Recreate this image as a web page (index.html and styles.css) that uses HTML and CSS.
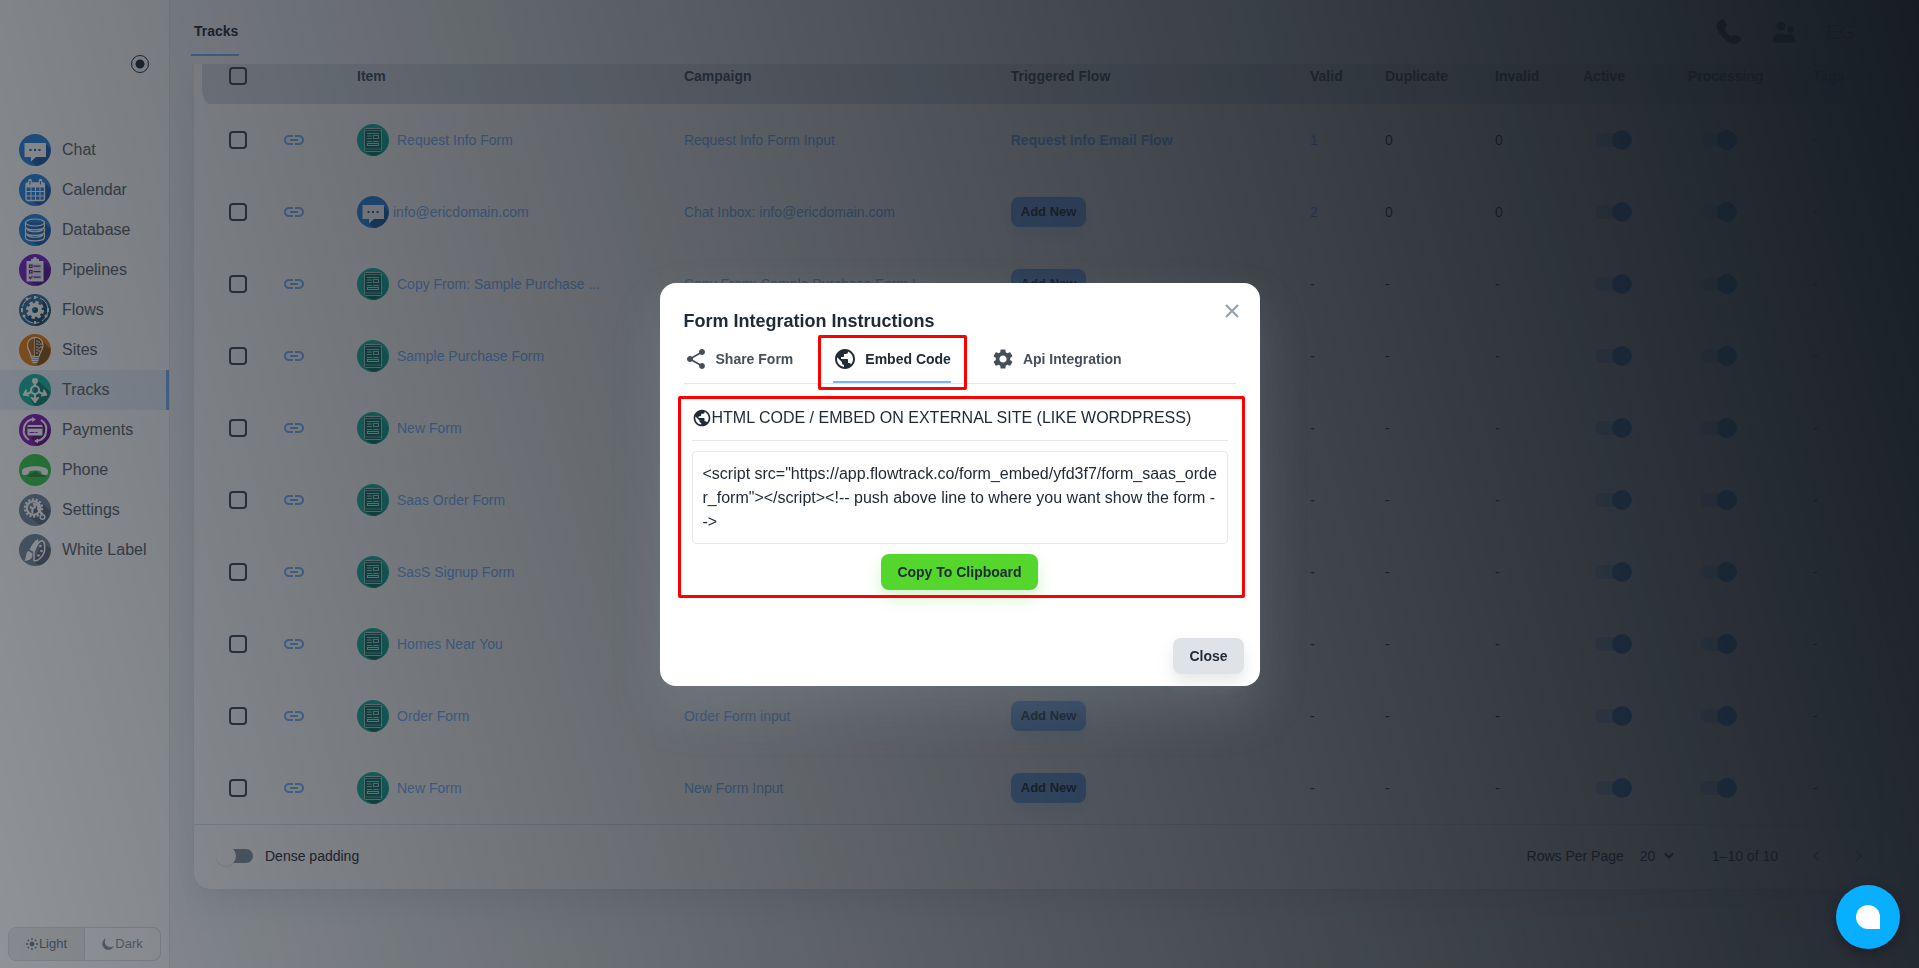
FILE: index.html
```html
<!DOCTYPE html>
<html lang="en">
<head>
<meta charset="utf-8">
<title>Tracks</title>
<link rel="stylesheet" href="styles.css">
</head>
<body>
<svg class="sprite" aria-hidden="true">
  <symbol id="chat" viewBox="0 0 32 32"><circle cx="16" cy="16" r="16" fill="#2583e0"/><path d="M26 9.500l5.400 5.500A16 16 0 0 1 17 32l-5-5z" fill="#1a5ba6"/><path d="M5.500 9h21.500v14H17l-5 4.500V23H5.500z" fill="#fff"/><path d="M10.500 15h2v2h-2zm4.500 0h2v2h-2zm4.500 0h2v2h-2z" fill="#1a5ba6"/></symbol>
  <symbol id="calendar" viewBox="0 0 32 32"><circle cx="16" cy="16" r="16" fill="#2583e0"/><path d="M26 9l5.500 6A16 16 0 0 1 20 31.500L12 26z" fill="#1a5ba6"/><rect x="7" y="9" width="18.500" height="17.500" rx="2" fill="#2583e0" stroke="#fff" stroke-width="1.300"/><path d="M7 9h18.500v4.500H7z" fill="#fff"/><path d="M11 6.500v4m10.500-4v4" stroke="#fff" stroke-width="3.500" stroke-linecap="round"/><path d="M11 7v3.500m10.500-3.500v3.500" stroke="#2583e0" stroke-width="1.200"/><path d="M7 17.500h18M7 22h18M12 13v13m4.500-13v13M21 13v13" stroke="#fff"/></symbol>
  <symbol id="database" viewBox="0 0 32 32"><circle cx="16" cy="16" r="16" fill="#2583e0"/><path d="M25 8l6.500 7A16 16 0 0 1 20 31.500l-8-5z" fill="#1a5ba6"/><path d="M7 8.500v15c0 4.500 18 4.500 18 0v-15z" fill="#2168b8"/><g fill="none" stroke="#fff" stroke-width="1.200"><ellipse cx="16" cy="8.500" rx="9.500" ry="3.500"/><path d="M6.500 8.500v4c0 4.500 19 4.500 19 0v-4M6.500 14v4c0 4.500 19 4.500 19 0v-4M6.500 19.500v4c0 4.500 19 4.500 19 0v-4M8 15.500c3 3 13 3 16 0M8 21c3 3 13 3 16 0"/></g></symbol>
  <symbol id="pipelines" viewBox="0 0 32 32"><circle cx="16" cy="16" r="16" fill="#7721c6"/><path d="M24.500 8l7 6A16 16 0 0 1 19 31.500L9 27z" fill="#511b91"/><path d="M7.500 7h17v20.500h-17z" fill="#fff"/><path d="M9.500 9.500h13v16h-13z" fill="#e8e0f1"/><path d="M12 5h2a2 2 0 0 1 4 0h2v4h-8z" fill="#fff"/><path d="M10.500 11h2.500v2.500h-2.500zm0 5.500h2.500v2.500h-2.500zM14.500 12.200h7m-7 5.500h7m-7 5.500h7M10 23l1.500 1.500 2-2.500" stroke="#612199" fill="none" stroke-width="1.200"/></symbol>
  <symbol id="flows" viewBox="0 0 32 32"><circle cx="16" cy="16" r="16" fill="#2d7199"/><path d="M25 7l6.500 8A16 16 0 0 1 17 32L8 24z" fill="#204d6b"/><circle cx="16" cy="16" r="13" fill="none" stroke="#fff" stroke-width="1" stroke-dasharray="13 3 4 2"/><path d="M16 2v3m0 22v3M3 14v4m26-4v4" stroke="#fff" stroke-width="2"/><circle cx="8" cy="5" r="1.500" fill="#fff"/><circle cx="27" cy="22" r="1.500" fill="#fff"/><circle cx="5" cy="22" r="1.500" fill="#fff"/><circle cx="16" cy="16" r="7.500" fill="none" stroke="#fff" stroke-width="3" stroke-dasharray="3.400 2.490"/><circle cx="16" cy="16" r="5" fill="none" stroke="#fff" stroke-width="4"/></symbol>
  <symbol id="sites" viewBox="0 0 32 32"><circle cx="16" cy="16" r="16" fill="#e98110"/><path d="M22 6l9.500 9A16 16 0 0 1 19 31.500L13 27z" fill="#8f540f"/><path d="M16 3.500v19h-4c0-4-3.500-6-3.500-11A7.500 7.500 0 0 1 16 3.500z" fill="#bd6b10" stroke="#fff" stroke-width="1.300"/><path d="M16 3.500a7.500 7.500 0 0 1 8 8c0 4-3.500 7-4 11h-4" fill="#7a4a12" stroke="#fff" stroke-width="1.200"/><path d="M18 6v14m2-13v4m0 2v5m2-9v5" stroke="#fff" stroke-width="1.100" stroke-dasharray="2 1"/><path d="M12 24.500h8m-7.500 2h7m-6 2h5" stroke="#fff" stroke-width="1.400"/></symbol>
  <symbol id="tracks" viewBox="0 0 32 32"><circle cx="16" cy="16" r="16" fill="#1bb5a0"/><path d="M17 5l14.500 13A16 16 0 0 1 16 32l-4-5 3-8z" fill="#17816f"/><circle cx="16" cy="16" r="4" fill="none" stroke="#fff" stroke-width="2"/><path d="M16 6v6m-4 6l-4 2m12-2l4 2m-8 0v5" stroke="#fff" stroke-width="2.200"/><circle cx="16" cy="7" r="3" fill="#fff"/><path d="M12 23.500c3 1 5 1 8 0l-4 5.500zM7 15.500c0 3 1.500 5 3 6.500l-6-1zM25 15.500c0 3-1.500 5-3 6.500l6-1z" fill="#fff" stroke="#fff"/></symbol>
  <symbol id="payments" viewBox="0 0 32 32"><circle cx="16" cy="16" r="16" fill="#861bb5"/><path d="M24 10l7.500 6A16 16 0 0 1 18 32l-6-8z" fill="#5d137f"/><path d="M14 5a11.500 11.500 0 0 0-4 21M18 27a11.500 11.500 0 0 0 4-21M5 17a11 11 0 0 1 5-10.500M27 15a11 11 0 0 1-5 11" fill="none" stroke="#fff" stroke-width="2"/><path d="M13 3l4 2.500-4 2.500zM19 24.500l-4 2.500 4 2.500z" fill="#fff"/><rect x="8.500" y="11" width="15" height="10.500" rx="1" fill="#fff"/><path d="M8.500 13.800h15" stroke="#5d137f" stroke-width="1.600"/><path d="M10.500 18.500h5m1 0h2" stroke="#861bb5"/></symbol>
  <symbol id="phone" viewBox="0 0 32 32"><circle cx="16" cy="16" r="16" fill="#36c94c"/><path d="M29 18l-7 3-5-4-6 3-4 2 5 1h14z" fill="#278f38"/><path d="M3 17c0-6 26-6.500 26 0 0 3-.5 4-2 4-3 0-5-.5-5-3.500-4-1.500-8-1.500-12 0 0 3-2 3.500-5 3.500-1.500 0-2-1-2-4z" fill="#fff"/></symbol>
  <symbol id="settings" viewBox="0 0 32 32"><circle cx="16" cy="16" r="16" fill="#76879a"/><path d="M22 8l9.500 9A16 16 0 0 1 21 31l-12-9z" fill="#596878"/><circle cx="14.500" cy="14" r="8.500" fill="none" stroke="#fff" stroke-width="2.400" stroke-dasharray="2.200 1.614"/><circle cx="14.500" cy="14" r="6.700" fill="none" stroke="#fff" stroke-width="2"/><path d="M11 12.500l2.500 2.500 2.500-2-1-3c3-.5 5 2 4 5l5 6M14 16c-1 1-1 2 0 3" fill="none" stroke="#fff" stroke-width="2"/><circle cx="23.500" cy="23" r="2.300" fill="#596878" stroke="#fff" stroke-width="1.500"/></symbol>
  <symbol id="label" viewBox="0 0 32 32"><circle cx="16" cy="16" r="16" fill="#76879a"/><path d="M23 8l8.500 7A16 16 0 0 1 20 31.500l-5-4z" fill="#596878"/><path d="M15 19c1-6 5-12 8-12.500 3 1 3 5 2.500 11C24 22 19 28 15 26.500z" fill="none" stroke="#fff" stroke-width="1.500"/><circle cx="21.500" cy="12" r="1.300" fill="#fff"/><circle cx="22.500" cy="17" r="1.300" fill="#fff"/><circle cx="19.500" cy="21.500" r="1.300" fill="#fff"/><path d="M19 5c1.500 5-2.500 10-4.500 13L10.500 15.500C13 11 15 7 19 5zM9.500 17l4 2.500c0 5-2.500 7-8 7.500C7.500 24 6.500 18 9.500 17z" fill="#fff"/></symbol>
  <symbol id="form" viewBox="0 0 32 32"><circle cx="16" cy="16" r="16" fill="#13b4a0"/><path d="M24 5l7.500 10A16 16 0 0 1 17 32l-9-4z" fill="#0fa291"/><path d="M8 27.500h17l-6 4-4 .3z" fill="#0b6f66"/><rect x="7.500" y="4.500" width="17" height="23" rx="1" fill="#0c6f64" stroke="#a9d3cf"/><path d="M7.500 25h17M8 6.500h16" stroke="#8fc3be" stroke-width=".8"/><path d="M10 9.500h12M10 12h5m-5 2.500h5m-5 3h5M16 17.500h6" stroke="#a9d3cf"/><rect x="16.500" y="11.500" width="5" height="3" fill="none" stroke="#a9d3cf"/><rect x="10.500" y="19.500" width="11" height="2" fill="none" stroke="#c4e2df"/></symbol>
  <symbol id="link" viewBox="0 0 24 24"><path fill="currentColor" d="M3.900 12c0-1.710 1.390-3.100 3.100-3.100h4V7H7c-2.760 0-5 2.240-5 5s2.240 5 5 5h4v-1.900H7c-1.710 0-3.100-1.390-3.100-3.100zM8 13h8v-2H8v2zm9-6h-4v1.900h4c1.710 0 3.100 1.390 3.100 3.100s-1.390 3.100-3.100 3.100h-4V17h4c2.760 0 5-2.240 5-5s-2.240-5-5-5z"/></symbol>
  <symbol id="globe" viewBox="0 0 24 24"><path fill="currentColor" d="M12 2C6.480 2 2 6.480 2 12s4.480 10 10 10 10-4.480 10-10S17.520 2 12 2zm-1 17.930c-3.950-.49-7-3.850-7-7.930 0-.62.080-1.210.21-1.790L9 15v1c0 1.100.9 2 2 2v1.930zm6.900-2.540c-.26-.81-1-1.390-1.900-1.390h-1v-3c0-.55-.45-1-1-1H8v-2h2c.55 0 1-.45 1-1V7h2c1.100 0 2-.9 2-2v-.41c2.930 1.190 5 4.060 5 7.410 0 2.080-.8 3.970-2.100 5.390z"/></symbol>
</svg>

<div class="app">
  <aside class="sidebar">
    <div class="pin"><input type="radio" checked aria-label="Pin menu"></div>
    <nav class="menu">
      <a href="#"><svg><use href="#chat"/></svg>Chat</a>
      <a href="#"><svg><use href="#calendar"/></svg>Calendar</a>
      <a href="#"><svg><use href="#database"/></svg>Database</a>
      <a href="#"><svg><use href="#pipelines"/></svg>Pipelines</a>
      <a href="#"><svg><use href="#flows"/></svg>Flows</a>
      <a href="#"><svg><use href="#sites"/></svg>Sites</a>
      <a href="#" class="current"><svg><use href="#tracks"/></svg>Tracks</a>
      <a href="#"><svg><use href="#payments"/></svg>Payments</a>
      <a href="#"><svg><use href="#phone"/></svg>Phone</a>
      <a href="#"><svg><use href="#settings"/></svg>Settings</a>
      <a href="#"><svg><use href="#label"/></svg>White Label</a>
    </nav>
    <div class="theme">
      <button class="on"><svg viewBox="0 0 12 12"><circle cx="6" cy="6" r="2.300" fill="currentColor"/><path d="M6 0v2m0 8v2M0 6h2m8 0h2M1.800 1.800l1.300 1.300m5.800 5.800l1.300 1.300m0-8.400L8.900 3.100M3.100 8.900l-1.300 1.300" stroke="currentColor" stroke-width="1.300"/></svg>Light</button>
      <button><svg viewBox="0 0 12 12"><path d="M4 .3a6 6 0 1 0 8 7.500A5.500 5.500 0 0 1 4 .3z" fill="currentColor"/></svg>Dark</button>
    </div>
  </aside>

  <main class="main">
    <header class="topbar">
      <a href="#" class="page-tab">Tracks</a>
      <div class="tools">
        <svg class="tool-phone" viewBox="0 0 24 24"><path d="M4.200 1.200C5.500 0 7 .3 7.800 1.700l1.700 3c.7 1.300.4 2.500-.6 3.400l-1 .9c.8 2.600 3.600 5.700 6.600 7.200l1.100-1c1-.9 2.200-1 3.400-.3l3 1.900c1.400.9 1.600 2.400.5 3.600-2 2.600-5.300 4-8.500 2.300C7.500 19.500 3 14 .8 8.500-.2 5.500 1.600 3 4.200 1.200z" fill="currentColor"/></svg>
        <svg class="tool-people" viewBox="0 0 24 22"><circle cx="9" cy="5" r="4.700" fill="currentColor"/><circle cx="18.500" cy="8.500" r="3.200" fill="currentColor"/><path d="M.5 21.500c0-12 17-12 17 0zM14 14.500c4-3 9.500-.5 9.500 7H17c0-3-1-5-3-7z" fill="currentColor"/></svg>
        <span class="initials">EG</span>
      </div>
    </header>

    <section class="card">
      <table class="grid">
        <colgroup><col class="c-check"><col class="c-link"><col class="c-item"><col class="c-item"><col><col class="c-valid"><col class="c-dup"><col class="c-inv"><col class="c-act"><col class="c-proc"><col class="c-tags"></colgroup>
        <thead><tr><th><input type="checkbox" aria-label="Select all"></th><th></th><th>Item</th><th>Campaign</th><th>Triggered Flow</th><th>Valid</th><th>Duplicate</th><th>Invalid</th><th>Active</th><th>Processing</th><th>Tags</th></tr></thead>
        <tbody>
          <tr><td><input type="checkbox" aria-label="Select row"></td><td><a href="#" aria-label="Link"><svg class="link"><use href="#link"/></svg></a></td><td><a href="#" class="item"><svg><use href="#form"/></svg>Request Info Form</a></td><td><a href="#">Request Info Form Input</a></td><td><a href="#" class="strong">Request Info Email Flow</a></td><td><a href="#">1</a></td><td>0</td><td>0</td><td><input type="checkbox" class="switch" checked aria-label="Active"></td><td><input type="checkbox" class="switch" checked aria-label="Processing"></td><td>-</td></tr>
          <tr><td><input type="checkbox" aria-label="Select row"></td><td><a href="#" aria-label="Link"><svg class="link"><use href="#link"/></svg></a></td><td><a href="#" class="item near"><svg><use href="#chat"/></svg>info@ericdomain.com</a></td><td><a href="#">Chat Inbox: info@ericdomain.com</a></td><td><button class="add">Add New</button></td><td><a href="#">2</a></td><td>0</td><td>0</td><td><input type="checkbox" class="switch" checked aria-label="Active"></td><td><input type="checkbox" class="switch" checked aria-label="Processing"></td><td>-</td></tr>
          <tr><td><input type="checkbox" aria-label="Select row"></td><td><a href="#" aria-label="Link"><svg class="link"><use href="#link"/></svg></a></td><td><a href="#" class="item"><svg><use href="#form"/></svg>Copy From: Sample Purchase ...</a></td><td><a href="#">Copy From: Sample Purchase Form I...</a></td><td><button class="add">Add New</button></td><td>-</td><td>-</td><td>-</td><td><input type="checkbox" class="switch" checked aria-label="Active"></td><td><input type="checkbox" class="switch" checked aria-label="Processing"></td><td>-</td></tr>
          <tr><td><input type="checkbox" aria-label="Select row"></td><td><a href="#" aria-label="Link"><svg class="link"><use href="#link"/></svg></a></td><td><a href="#" class="item"><svg><use href="#form"/></svg>Sample Purchase Form</a></td><td></td><td></td><td>-</td><td>-</td><td>-</td><td><input type="checkbox" class="switch" checked aria-label="Active"></td><td><input type="checkbox" class="switch" checked aria-label="Processing"></td><td>-</td></tr>
          <tr><td><input type="checkbox" aria-label="Select row"></td><td><a href="#" aria-label="Link"><svg class="link"><use href="#link"/></svg></a></td><td><a href="#" class="item"><svg><use href="#form"/></svg>New Form</a></td><td></td><td></td><td>-</td><td>-</td><td>-</td><td><input type="checkbox" class="switch" checked aria-label="Active"></td><td><input type="checkbox" class="switch" checked aria-label="Processing"></td><td>-</td></tr>
          <tr><td><input type="checkbox" aria-label="Select row"></td><td><a href="#" aria-label="Link"><svg class="link"><use href="#link"/></svg></a></td><td><a href="#" class="item"><svg><use href="#form"/></svg>Saas Order Form</a></td><td></td><td></td><td>-</td><td>-</td><td>-</td><td><input type="checkbox" class="switch" checked aria-label="Active"></td><td><input type="checkbox" class="switch" checked aria-label="Processing"></td><td>-</td></tr>
          <tr><td><input type="checkbox" aria-label="Select row"></td><td><a href="#" aria-label="Link"><svg class="link"><use href="#link"/></svg></a></td><td><a href="#" class="item"><svg><use href="#form"/></svg>SasS Signup Form</a></td><td></td><td></td><td>-</td><td>-</td><td>-</td><td><input type="checkbox" class="switch" checked aria-label="Active"></td><td><input type="checkbox" class="switch" checked aria-label="Processing"></td><td>-</td></tr>
          <tr><td><input type="checkbox" aria-label="Select row"></td><td><a href="#" aria-label="Link"><svg class="link"><use href="#link"/></svg></a></td><td><a href="#" class="item"><svg><use href="#form"/></svg>Homes Near You</a></td><td></td><td></td><td>-</td><td>-</td><td>-</td><td><input type="checkbox" class="switch" checked aria-label="Active"></td><td><input type="checkbox" class="switch" checked aria-label="Processing"></td><td>-</td></tr>
          <tr><td><input type="checkbox" aria-label="Select row"></td><td><a href="#" aria-label="Link"><svg class="link"><use href="#link"/></svg></a></td><td><a href="#" class="item"><svg><use href="#form"/></svg>Order Form</a></td><td><a href="#">Order Form input</a></td><td><button class="add">Add New</button></td><td>-</td><td>-</td><td>-</td><td><input type="checkbox" class="switch" checked aria-label="Active"></td><td><input type="checkbox" class="switch" checked aria-label="Processing"></td><td>-</td></tr>
          <tr><td><input type="checkbox" aria-label="Select row"></td><td><a href="#" aria-label="Link"><svg class="link"><use href="#link"/></svg></a></td><td><a href="#" class="item"><svg><use href="#form"/></svg>New Form</a></td><td><a href="#">New Form Input</a></td><td><button class="add">Add New</button></td><td>-</td><td>-</td><td>-</td><td><input type="checkbox" class="switch" checked aria-label="Active"></td><td><input type="checkbox" class="switch" checked aria-label="Processing"></td><td>-</td></tr>
        </tbody>
      </table>
      <footer class="card-foot">
        <label class="dense"><input type="checkbox" class="switch">Dense padding</label>
        <div class="pager">
          <label for="rows">Rows Per Page</label>
          <span class="select"><select id="rows"><option>20</option></select><svg viewBox="0 0 10 8"><path d="M1 1.500l4 4 4-4" fill="none" stroke="currentColor" stroke-width="2"/></svg></span>
          <span class="range">1–10 of 10</span>
          <button aria-label="Previous page"><svg viewBox="0 0 8 12"><path d="M7 1L2 6l5 5" fill="none" stroke="currentColor" stroke-width="1.700"/></svg></button>
          <button aria-label="Next page"><svg viewBox="0 0 8 12"><path d="M1 1l5 5-5 5" fill="none" stroke="currentColor" stroke-width="1.700"/></svg></button>
        </div>
      </footer>
    </section>
  </main>
</div>

<div class="backdrop">
  <div class="modal" role="dialog" aria-labelledby="modal-title">
    <button class="dismiss" aria-label="Dismiss"><svg viewBox="0 0 14 14"><path d="M1 1l12 12M13 1L1 13" stroke="currentColor" stroke-width="2"/></svg></button>
    <h2 id="modal-title">Form Integration Instructions</h2>
    <div class="tabs" role="tablist">
      <button role="tab"><svg viewBox="0 0 24 24"><path fill="currentColor" d="M18 16.080c-.76 0-1.440.3-1.960.77L8.910 12.700c.05-.23.090-.46.090-.7s-.04-.47-.09-.7l7.050-4.110c.54.5 1.250.81 2.040.81 1.660 0 3-1.340 3-3s-1.340-3-3-3-3 1.340-3 3c0 .24.040.47.090.7L8.040 9.810C7.500 9.310 6.790 9 6 9c-1.660 0-3 1.340-3 3s1.340 3 3 3c.79 0 1.500-.31 2.040-.81l7.120 4.160c-.05.21-.08.43-.08.65 0 1.610 1.310 2.920 2.920 2.920s2.920-1.310 2.920-2.920-1.310-2.920-2.920-2.920z"/></svg>Share Form</button>
      <button role="tab" class="selected" aria-selected="true"><svg><use href="#globe"/></svg>Embed Code<span class="mark mark-tab"></span></button>
      <button role="tab"><svg viewBox="0 0 24 24"><path fill="currentColor" d="M19.140 12.940c.04-.3.060-.61.060-.94 0-.32-.02-.64-.07-.94l2.030-1.580c.18-.14.23-.41.12-.61l-1.920-3.320c-.12-.22-.37-.29-.59-.22l-2.390.96c-.5-.38-1.030-.7-1.620-.94l-.36-2.540c-.04-.24-.24-.41-.48-.41h-3.840c-.24 0-.43.17-.47.41l-.36 2.540c-.59.24-1.130.57-1.620.94l-2.390-.96c-.22-.08-.47 0-.59.22L2.740 8.870c-.12.21-.08.47.12.61l2.030 1.580c-.05.3-.09.63-.09.94s.02.64.07.94l-2.030 1.580c-.18.14-.23.41-.12.61l1.920 3.320c.12.22.37.29.59.22l2.390-.96c.5.38 1.030.7 1.620.94l.36 2.540c.05.24.24.41.48.41h3.840c.24 0 .44-.17.47-.41l.36-2.540c.59-.24 1.130-.56 1.620-.94l2.390.96c.22.08.47 0 .59-.22l1.920-3.320c.12-.22.07-.47-.12-.61l-2.010-1.580zM12 15.600c-1.980 0-3.600-1.620-3.600-3.600s1.620-3.600 3.600-3.600 3.600 1.620 3.600 3.600-1.620 3.600-3.600 3.600z"/></svg>Api Integration</button>
    </div>
    <div class="panel">
      <span class="mark mark-panel"></span>
      <h3><svg><use href="#globe"/></svg><label for="code">HTML CODE / EMBED ON EXTERNAL SITE (LIKE WORDPRESS)</label></h3>
      <textarea id="code" rows="3" readonly>&lt;script src="https://app.flowtrack.co/form_embed/yfd3f7/form_saas_order_form"&gt;&lt;/script&gt;&lt;!-- push above line to where you want show the form --&gt;</textarea>
      <button class="btn copy">Copy To Clipboard</button>
    </div>
    <div class="actions"><button class="btn close">Close</button></div>
  </div>
</div>
<button class="chat-bubble" aria-label="Open chat"><span></span></button>
</body>
</html>
```

FILE: styles.css
```css
* { box-sizing: border-box; }
body {
  margin: 0;
  height: 100vh;
  overflow: hidden;
  background: #fff;
  color: #212b36;
  font: 14px/22px "Liberation Sans", Arial, sans-serif;
}
button, input, select, textarea { font: inherit; color: inherit; margin: 0; }
button { border: 0; padding: 0; background: none; cursor: pointer; }
a { color: #78b1fc; text-decoration: none; }
svg { display: block; flex: none; }
.sprite { position: absolute; width: 0; height: 0; }

.app { display: flex; height: 100%; }

/* Sidebar */
.sidebar {
  display: flex;
  flex-direction: column;
  flex: none;
  width: 170px;
  border-right: 1px solid #e4e8eb;
}
.pin { display: flex; justify-content: flex-end; padding: 55px 20px 0 0; height: 130px; }
.pin input {
  appearance: none;
  width: 18px;
  height: 18px;
  border: 1px solid #212b36;
  border-radius: 50%;
  background: radial-gradient(circle, #212b36 4px, transparent 5px);
}
.menu a {
  display: flex;
  align-items: center;
  gap: 11px;
  height: 40px;
  padding-left: 19px;
  color: #57606a;
  font-size: 16px;
}
.menu svg { width: 32px; height: 32px; }
.menu .current { background: #e8f1fd; border-right: 3px solid #78b1fc; }
.theme {
  display: flex;
  height: 34px;
  margin: auto 8px 7px;
  border: 1px solid #dadee2;
  border-radius: 8px;
  overflow: hidden;
}
.theme button {
  display: flex;
  flex: 1;
  align-items: center;
  justify-content: center;
  gap: 1px;
  color: #8793a0;
  font-size: 13px;
}
.theme .on { background: #edeff1; border-right: 1px solid #dadee2; color: #637381; }
.theme svg { width: 12px; height: 12px; }

/* Content */
.main { flex: 1; min-width: 0; padding-right: 40px; padding-left: 24px; background: #f4f6f8; }
.topbar {
  position: relative;
  z-index: 1;
  display: flex;
  justify-content: space-between;
  height: 64px;
  margin: 0 -40px 0 -24px;
  padding: 0 64px 0 21px;
  background: #f3f5f7;
}
.page-tab {
  height: 56px;
  padding: 20px 1px 0 3px;
  border-bottom: 2px solid #78b1fc;
  color: #212b36;
  font-weight: bold;
}
.tools { display: flex; align-items: center; gap: 30px; color: #212b36; }
.tool-phone { width: 26px; height: 26px; }
.tool-people { width: 24px; height: 22px; }
.initials { color: #454f5b; font-size: 20px; }

.card {
  margin-top: -16px;
  border-radius: 16px;
  background: #fff;
  box-shadow: 0 0 2px rgba(145, 158, 171, .24), 0 16px 32px -4px rgba(145, 158, 171, .24);
}
.grid { width: 100%; border-collapse: separate; border-spacing: 0; table-layout: fixed; }
.c-check { width: 74px; }
.c-link { width: 73px; }
.c-item { width: 19.4%; }
.c-valid { width: 75px; }
.c-dup { width: 110px; }
.c-inv { width: 88px; }
.c-act { width: 105px; }
.c-proc { width: 125px; }
.c-tags { width: 82px; }
.grid th, .grid td { padding: 0 0 0 16px; text-align: left; white-space: nowrap; }
.grid th { height: 56px; background: #dbdfe8; color: #454f5b; }
.grid th:first-child { border-left: 8px solid #fff; border-bottom-left-radius: 16px; padding-left: 27px; }
.grid td { height: 72px; }
.grid td:first-child { padding-left: 35px; }
.grid input[aria-label^="Select"] {
  appearance: none;
  display: block;
  width: 18px;
  height: 18px;
  border: 2px solid #3c4855;
  border-radius: 4px;
}
.link { width: 24px; height: 24px; margin-left: -2px; }
.item { display: flex; align-items: center; gap: 8px; }
.item.near { gap: 4px; }
.item svg { width: 32px; height: 32px; }
.strong { font-weight: bold; }
.add {
  display: block;
  height: 30px;
  padding: 0 10px;
  border-radius: 8px;
  background: #78b1fc;
  box-shadow: 0 8px 16px rgba(120, 177, 252, .24);
  font-size: 13px;
  font-weight: bold;
}
.switch {
  appearance: none;
  position: relative;
  display: block;
  width: 34px;
  height: 14px;
  margin-left: 12px;
  border-radius: 7px;
  background: #8391a0;
}
.switch::after {
  content: "";
  position: absolute;
  top: -3px;
  left: -3px;
  width: 20px;
  height: 20px;
  border-radius: 50%;
  background: #fff;
  box-shadow: 0 1px 1px rgba(145, 158, 171, .3);
}
.switch:checked { background: #bcd8fd; }
.switch:checked::after { left: 17px; background: #4790e4; box-shadow: none; }

.card-foot {
  display: flex;
  align-items: center;
  justify-content: space-between;
  height: 65px;
  padding: 0 12px 3px 13px;
  border-top: 1px solid #e0e4e8;
}
.dense { display: flex; align-items: center; gap: 12px; }
.pager { display: flex; align-items: center; color: #212b36; }
.select { position: relative; display: flex; align-items: center; margin: 0 38px 0 16px; }
.select select { appearance: none; width: 34px; border: 0; padding: 0; background: none; }
.select svg { position: absolute; right: 0; width: 10px; height: 8px; }
.range { margin-right: 34px; }
.pager button { width: 12px; color: #7d8894; }
.pager button + button { margin-left: 31px; }
.pager button svg { width: 8px; height: 12px; }

/* Dialog */
.backdrop {
  position: fixed;
  inset: 0;
  z-index: 2;
  display: flex;
  align-items: center;
  justify-content: center;
  background: linear-gradient(75deg, rgba(22, 28, 36, .48) 0%, #161c24 100%);
}
.modal {
  position: relative;
  width: 600px;
  padding: 24px 24px 12px;
  border-radius: 16px;
  background: #fff;
  box-shadow: 0 24px 48px rgba(145, 158, 171, .24);
}
.modal h2 { margin: 0; font-size: 18px; line-height: 28px; }
.dismiss { position: absolute; top: 21px; right: 21px; color: #919eab; }
.dismiss svg { width: 14px; height: 14px; }
.tabs { display: flex; gap: 40px; border-bottom: 1px solid #e4e8eb; }
.tabs button {
  position: relative;
  display: flex;
  align-items: center;
  gap: 8px;
  height: 48px;
  color: #454f5b;
  font-weight: bold;
}
.tabs .selected { color: #212b36; box-shadow: inset 0 -2px #78b1fc; }
.tabs svg { width: 24px; height: 24px; }
.mark { position: absolute; border: 3px solid #f00; border-radius: 2px; pointer-events: none; }
.mark-tab { inset: 0 -16px -7px -15px; }
.mark-panel { inset: 12px -9px -8px -6px; }
.panel { position: relative; padding: 22px 8px 0; }
.panel h3 {
  display: flex;
  align-items: center;
  margin: 0 0 10px;
  padding-bottom: 10px;
  border-bottom: 1px solid #e4e8eb;
  font-size: 16px;
  font-weight: normal;
  line-height: 24px;
}
.panel h3 svg { width: 20px; height: 20px; }
.panel textarea {
  display: block;
  width: 100%;
  padding: 10px 8px 9px 10px;
  border: 1px solid #e4e8eb;
  border-radius: 4px;
  outline: 0;
  resize: none;
  overflow: hidden;
  font-size: 16px;
  line-height: 24px;
  word-break: break-all;
}
.btn { display: block; height: 36px; padding: 0 16px; border-radius: 8px; font-weight: bold; }
.copy { margin: 10px auto 0; background: #54d62c; box-shadow: 0 8px 16px rgba(84, 214, 44, .24); }
.actions { display: flex; justify-content: flex-end; margin: 48px -8px 0 0; }
.close { background: #dfe3e8; box-shadow: 0 8px 16px rgba(145, 158, 171, .24); }

.chat-bubble {
  position: fixed;
  right: 19px;
  bottom: 19px;
  z-index: 3;
  display: grid;
  place-items: center;
  width: 64px;
  height: 64px;
  border-radius: 50%;
  background: #08aeff;
  box-shadow: 0 4px 12px rgba(0, 0, 0, .3);
}
.chat-bubble span { width: 24px; height: 24px; border-radius: 12px 12px 0 12px; background: #fff; }
```
